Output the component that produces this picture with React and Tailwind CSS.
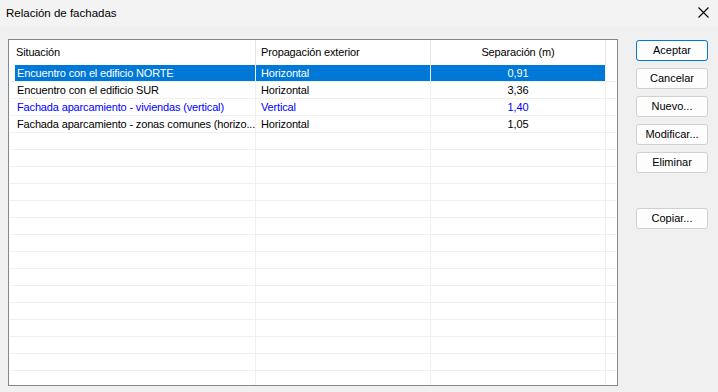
import { useState } from "react";

const rows = [
  { situacion: "Encuentro con el edificio NORTE", propagacion: "Horizontal", separacion: "0,91" },
  { situacion: "Encuentro con el edificio SUR", propagacion: "Horizontal", separacion: "3,36" },
  { situacion: "Fachada aparcamiento - viviendas (vertical)", propagacion: "Vertical", separacion: "1,40", blue: true },
  { situacion: "Fachada aparcamiento - zonas comunes (horizo...", propagacion: "Horizontal", separacion: "1,05" },
];

const buttons = [
  { label: "Aceptar", primary: true },
  { label: "Cancelar" },
  { label: "Nuevo..." },
  { label: "Modificar..." },
  { label: "Eliminar" },
  { spacer: true },
  { label: "Copiar..." },
];

function Row({ row, selected, onSelect }) {
  const textColor = selected ? "text-white" : row?.blue ? "text-[#0000ff]" : "text-black";
  const cellBg = selected ? "bg-[#0078d7]" : "";

  return (
    <div
      className="mx-px flex h-[17px] shrink-0 border-b border-[#f0f0f0] tracking-[-0.15px]"
      onClick={onSelect}
    >
      <div className="flex h-full w-[246px] shrink-0 border-r border-[#f0f0f0]">
        <div className={`ml-[5px] flex-1 overflow-hidden whitespace-nowrap pl-[2px] leading-[16px] ${cellBg} ${textColor}`}>
          {row?.situacion}
        </div>
      </div>
      <div className={`h-full w-[175px] shrink-0 overflow-hidden whitespace-nowrap border-r border-[#f0f0f0] pl-[5px] leading-[16px] ${cellBg} ${textColor}`}>
        {row?.propagacion}
      </div>
      <div className={`h-full w-[175px] shrink-0 border-r border-[#f0f0f0] text-center leading-[16px] ${cellBg} ${textColor}`}>
        {row?.separacion}
      </div>
      <div className="h-full flex-1" />
    </div>
  );
}

export default function App() {
  const [selected, setSelected] = useState(0);
  const emptyRows = Array.from({ length: 16 });

  return (
    <div
      className="flex h-[392px] w-[718px] flex-col overflow-hidden bg-[#f0f0f0] text-[11px] text-black"
      style={{ fontFamily: '"Liberation Sans", Arial, sans-serif' }}
    >
      {/* title bar */}
      <div className="flex h-[27px] shrink-0 items-center justify-between bg-[#f3f3f3] pl-[6px] pr-[9px]">
        <span className="text-[11.5px]">Relación de fachadas</span>
        <svg width="11" height="11" viewBox="0 0 11 11" className="mb-[2px]">
          <path d="M0.5 0.5 L10.5 10.5 M10.5 0.5 L0.5 10.5" stroke="#000" strokeWidth="1.1" />
        </svg>
      </div>

      <div className="flex flex-1 pl-[8px] pt-[12px]">
        {/* list view */}
        <div className="flex h-[347px] w-[610px] shrink-0 flex-col overflow-hidden border border-[#828790] bg-white">
          <div className="mx-px flex h-[25px] shrink-0 items-stretch tracking-[-0.15px]">
            <div className="flex w-[246px] shrink-0 items-center border-r border-[#e5e5e5] pl-[6px]">Situación</div>
            <div className="flex w-[175px] shrink-0 items-center border-r border-[#e5e5e5] pl-[5px]">Propagación exterior</div>
            <div className="flex w-[175px] shrink-0 items-center justify-center border-r border-[#e5e5e5]">Separación (m)</div>
            <div className="flex-1" />
          </div>
          {rows.map((row, i) => (
            <Row key={i} row={row} selected={selected === i} onSelect={() => setSelected(i)} />
          ))}
          {emptyRows.map((_, i) => (
            <Row key={`e${i}`} />
          ))}
        </div>

        {/* buttons */}
        <div className="ml-[18px] flex flex-col gap-[7px] pt-px">
          {buttons.map((b, i) =>
            b.spacer ? (
              <div key={i} className="h-[21px]" />
            ) : (
              <button
                key={i}
                className={`h-[21px] w-[72px] rounded-[3px] border bg-[#fdfdfd] text-[11px] leading-none text-black ${
                  b.primary ? "border-[#0078d7]" : "border-[#d0d0d0]"
                }`}
              >
                {b.label}
              </button>
            )
          )}
        </div>
      </div>
    </div>
  );
}
